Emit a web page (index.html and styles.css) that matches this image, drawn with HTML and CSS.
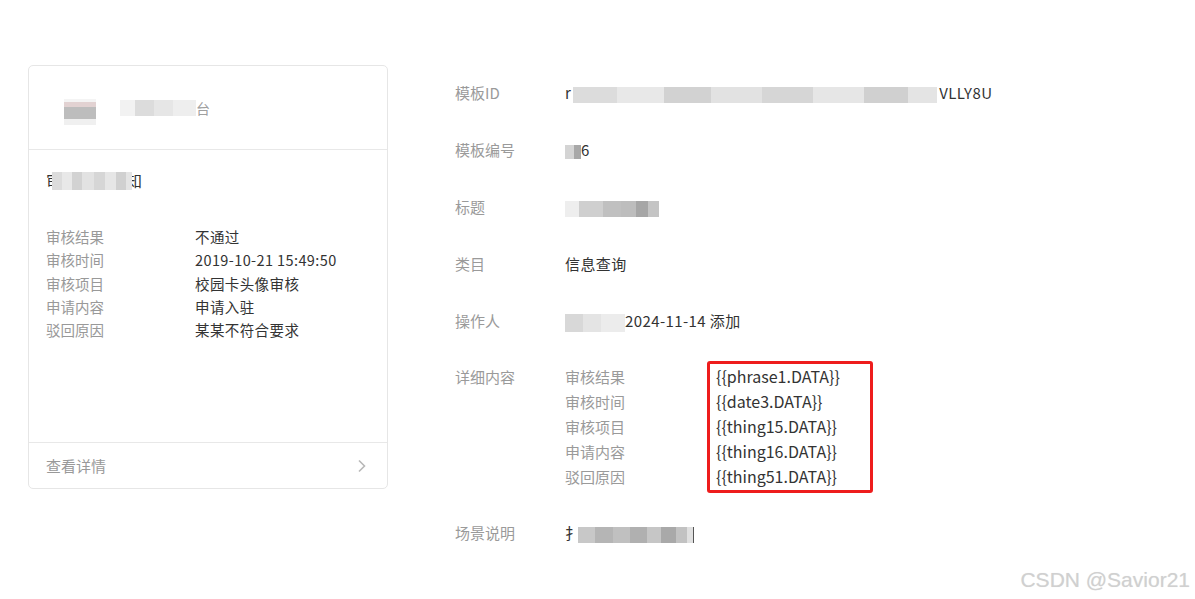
FILE: index.html
```html
<!DOCTYPE html>
<html lang="zh-CN">
<head>
  <meta charset="UTF-8" />
  <meta name="viewport" content="width=device-width, initial-scale=1.0"/>
  <title>模板详情</title>
  <link rel="stylesheet" href="styles.css">
</head>
<body>
  <div class="page">
    <!-- 左侧：消息预览卡片 -->
    <section class="card">
      <div class="card-head">
        <span class="mosaic logo"></span>
        <span class="mosaic head-name"></span>
        <span class="head-tail">台</span>
      </div>
      <div class="card-body">
        <div class="card-title">审<span class="mosaic title-blur"></span>知</div>
        <dl class="kv">
          <dt>审核结果</dt><dd>不通过</dd>
          <dt>审核时间</dt><dd>2019-10-21 15:49:50</dd>
          <dt>审核项目</dt><dd>校园卡头像审核</dd>
          <dt>申请内容</dt><dd>申请入驻</dd>
          <dt>驳回原因</dt><dd>某某不符合要求</dd>
        </dl>
      </div>
      <div class="card-foot">
        <span>查看详情</span>
        <svg class="arrow" width="10" height="14" viewBox="0 0 10 14"><path d="M2 1.5 L7.5 7 L2 12.5" fill="none" stroke="#b8b8b8" stroke-width="1.6"/></svg>
      </div>
    </section>

    <!-- 右侧：模板信息 -->
    <section class="info">
      <div class="row">
        <div class="label">模板ID</div>
        <div class="value">r<span class="mosaic id-blur"></span>VLLY8U</div>
      </div>
      <div class="row">
        <div class="label">模板编号</div>
        <div class="value"><span class="mosaic num-blur"></span>6</div>
      </div>
      <div class="row">
        <div class="label">标题</div>
        <div class="value"><span class="mosaic title2-blur"></span></div>
      </div>
      <div class="row">
        <div class="label">类目</div>
        <div class="value">信息查询</div>
      </div>
      <div class="row">
        <div class="label">操作人</div>
        <div class="value"><span class="mosaic op-blur"></span>2024-11-14 添加</div>
      </div>
      <div class="row detail">
        <div class="label">详细内容</div>
        <div class="value">
          <div class="fields">
            <div class="names">
              <div>审核结果</div>
              <div>审核时间</div>
              <div>审核项目</div>
              <div>申请内容</div>
              <div>驳回原因</div>
            </div>
            <div class="keys">
              <div>{{phrase1.DATA}}</div>
              <div>{{date3.DATA}}</div>
              <div>{{thing15.DATA}}</div>
              <div>{{thing16.DATA}}</div>
              <div>{{thing51.DATA}}</div>
            </div>
          </div>
        </div>
      </div>
      <div class="row">
        <div class="label">场景说明</div>
        <div class="value">扌<span class="mosaic scene-blur"></span><span class="bar"></span></div>
      </div>
    </section>
  </div>
  <div class="watermark">CSDN @Savior21</div>
</body>
</html>
```

FILE: styles.css
```css
body {
  margin: 0;
  background-color: #fff;
  font-family: "Noto Sans CJK SC", "Open Sans", sans-serif;
  color: #333;
}
.page {
  display: flex;
  align-items: flex-start;
  padding: 65px 0 0 28px;
}

/* 打码区域 */
.mosaic {
  display: inline-block;
  vertical-align: middle;
  background: linear-gradient(90deg, #dcdcdc 0 12%, #e8e8e8 12% 25%, #d2d2d2 25% 38%, #e2e2e2 38% 52%, #d6d6d6 52% 66%, #e6e6e6 66% 80%, #d0d0d0 80% 92%, #e4e4e4 92%);
}

/* 左侧卡片 */
.card {
  width: 358px;
  height: 422px;
  border: 1px solid #e6e6e6;
  border-radius: 5px;
  display: flex;
  flex-direction: column;
  flex-shrink: 0;
}
.card-head {
  height: 83px;
  border-bottom: 1px solid #e8e8e8;
  display: flex;
  align-items: center;
  padding-left: 35px;
  font-size: 14px;
}
.card-head .logo {
  width: 32px;
  height: 26px;
  margin-top: 8px;
  background: linear-gradient(180deg, #f4f4f4 0 10%, #e2d2d2 10% 30%, #bdbdbd 30% 75%, #f0f0f0 75%);
}
.card-head .head-name {
  width: 76px;
  height: 16px;
  margin-left: 24px;
  background: linear-gradient(90deg, #f2f2f2 0 20%, #dcdcdc 20% 45%, #e6e6e6 45% 70%, #eeeeee 70%);
}
.head-tail {
  color: #a0a0a0;
}
.card-body {
  flex: 1;
  padding: 17px 17px 0;
}
.card-title {
  font-size: 16px;
  line-height: 26px;
  color: #333;
  margin-bottom: 32px;
}
.title-blur {
  width: 80px;
  height: 18px;
  margin: 0 -6px 0 -10px;
  position: relative;
  top: -2px;
}
.kv {
  margin: 0;
  display: grid;
  grid-template-columns: 149px 1fr;
  font-size: 14.5px;
  line-height: 23.3px;
}
.kv dt {
  color: #999;
}
.kv dd {
  margin: 0;
  color: #333;
  letter-spacing: 0.4px;
}
.card-foot {
  height: 45px;
  border-top: 1px solid #e8e8e8;
  display: flex;
  align-items: center;
  justify-content: space-between;
  padding: 0 20px 0 17px;
  font-size: 15px;
  color: #999;
}

/* 右侧信息 */
.info {
  margin-left: 67px;
  padding-top: 17px;
  font-size: 15px;
}
.row {
  display: grid;
  grid-template-columns: 110px 1fr;
  height: 22px;
  line-height: 22px;
  margin-bottom: 35px;
}
.label {
  color: #9a9a9a;
}
.value {
  color: #333;
  letter-spacing: 0.4px;
}
.id-blur {
  width: 364px;
  height: 16px;
  margin: 0 2px;
}
.num-blur {
  width: 16px;
  height: 14px;
  background: linear-gradient(90deg, #d4d4d4 0 55%, #a8a8a8 55%);
}
.title2-blur {
  width: 94px;
  height: 16px;
  background: linear-gradient(90deg, #eeeeee 0 15%, #cfcfcf 15% 40%, #c0c0c0 40% 60%, #bdbdbd 60% 75%, #a6a6a6 75% 88%, #c4c4c4 88%);
}
.op-blur {
  width: 60px;
  height: 18px;
  background: linear-gradient(90deg, #d8d8d8 0 30%, #e4e4e4 30% 60%, #ececec 60%);
}
.scene-blur {
  width: 115px;
  height: 16px;
  margin-left: -2px;
  background: linear-gradient(90deg, #c8c8c8 0 15%, #b5b5b5 15% 30%, #c0c0c0 30% 45%, #b0b0b0 45% 60%, #c6c6c6 60% 72%, #a9a9a9 72% 85%, #c2c2c2 85% 95%, #e0e0e0 95%);
}
.bar {
  display: inline-block;
  vertical-align: middle;
  width: 1px;
  height: 16px;
  background-color: #555;
}
.detail {
  height: auto;
  line-height: 25px;
  margin-top: -3.5px;
  margin-bottom: 33.5px;
}
.detail .value {
  letter-spacing: 0;
}
.fields {
  display: flex;
}
.names {
  width: 142px;
  color: #9a9a9a;
}
.keys {
  margin: -3px 0 -4px;
  border: 3px solid #ee1c1c;
  border-radius: 3px;
  padding: 0 30px 1px 6px;
  font-size: 16px;
  color: #333;
}

.watermark {
  position: absolute;
  right: 5px;
  bottom: 7px;
  font-family: "Liberation Sans", sans-serif;
  font-size: 21px;
  color: #d0d0d0;
  text-shadow: 0 0 1px #e4e4e4;
}
```
